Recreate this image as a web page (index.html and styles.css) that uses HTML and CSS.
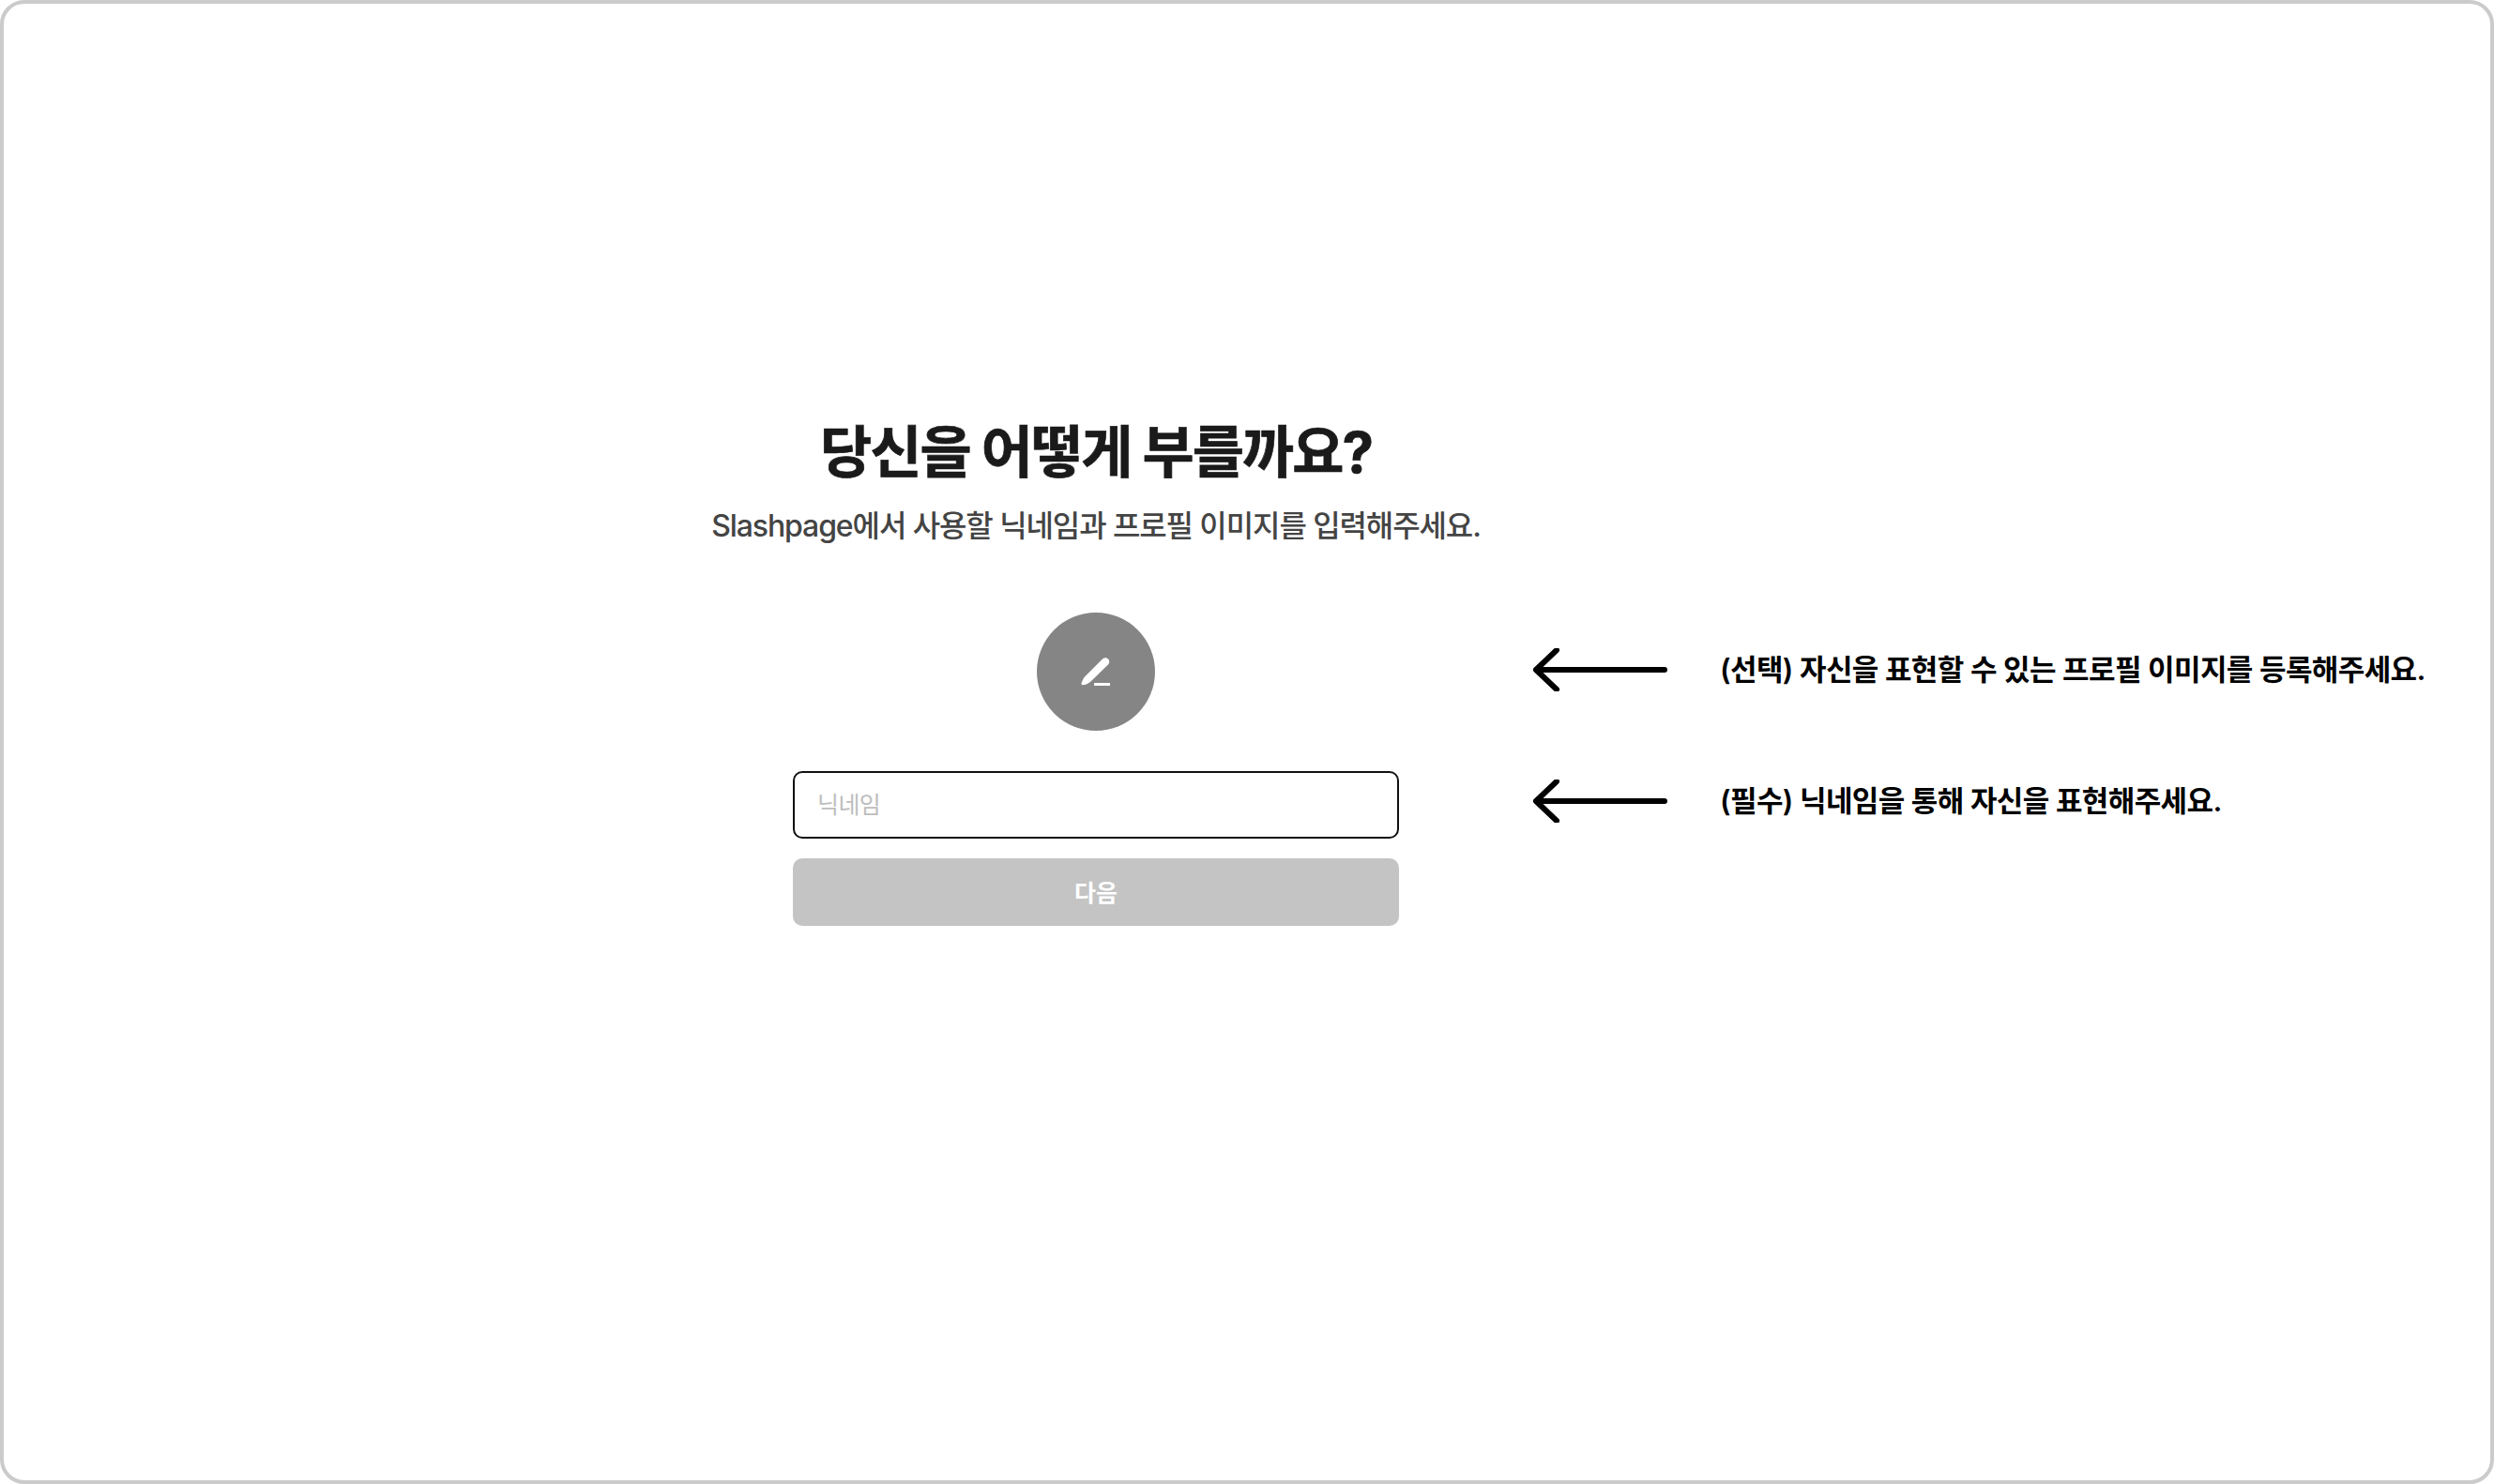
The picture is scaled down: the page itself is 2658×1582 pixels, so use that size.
FILE: index.html
```html
<!DOCTYPE html>
<html lang="ko">
<head>
    <meta charset="UTF-8">
    <title>Slashpage</title>
    <link rel="stylesheet" href="styles.css">
</head>
<body>
    <div class="frame">
        <div class="signup">
            <div class="intro">
                <h1>당신을 어떻게 부를까요?</h1>
                <p>Slashpage에서 사용할 닉네임과 프로필 이미지를 입력해주세요.</p>
            </div>

            <div class="avatar-cell">
                <button class="avatar" type="button" aria-label="프로필 이미지 편집">
                    <svg width="34" height="30" viewBox="0 0 34 30">
                        <path d="M24 1.5 C26 -0.3 28.5 0 30 1.5 C31.5 3 31.7 5.5 30 7.5 L11 26 C8.5 28 5 29.3 3 29.3 C1.7 29.3 1.2 28.3 1.6 27 C2.3 25 3.5 22.5 5 20.5 Z" fill="#fff"/>
                        <rect x="15" y="27" width="17" height="3" fill="#fff"/>
                    </svg>
                </button>
            </div>
            <div class="note note-avatar">
                <svg class="arrow" width="144" height="46" viewBox="0 0 144 46">
                    <path d="M141 23 H4 M26 2 L4 23 L26 44" fill="none" stroke="#000" stroke-width="6" stroke-linecap="round" stroke-linejoin="round"/>
                </svg>
                <span>(선택) 자신을 표현할 수 있는 프로필 이미지를 등록해주세요.</span>
            </div>

            <input class="nickname" type="text" placeholder="닉네임">
            <div class="note note-nickname">
                <svg class="arrow" width="144" height="46" viewBox="0 0 144 46">
                    <path d="M141 23 H4 M26 2 L4 23 L26 44" fill="none" stroke="#000" stroke-width="6" stroke-linecap="round" stroke-linejoin="round"/>
                </svg>
                <span>(필수) 닉네임을 통해 자신을 표현해주세요.</span>
            </div>

            <button class="next" type="button" disabled>다음</button>
        </div>
    </div>
</body>
</html>
```

FILE: styles.css
```css
* {
    box-sizing: border-box;
    margin: 0;
    padding: 0;
}

body {
    font-family: Inter, "Noto Sans CJK KR", sans-serif;
    background: #fff;
    color: #1a1a1a;
}

.frame {
    width: 2658px;
    height: 1582px;
    border: 4px solid #cbcbcb;
    border-radius: 26px;
    padding: 438px 0 0 841px;
    background: #fff;
}

.signup {
    display: grid;
    grid-template-columns: 646px auto;
    column-gap: 142px;
    justify-content: start;
}

.intro {
    grid-column: 1;
    grid-row: 1;
    text-align: center;
    margin: 0 -100px 70px;
}

.intro h1 {
    font-size: 60px;
    line-height: 80px;
    font-weight: 700;
    letter-spacing: -2px;
    -webkit-text-stroke: 0.7px #1a1a1a;
}

.intro p {
    margin-top: 17px;
    font-size: 32px;
    line-height: 44px;
    font-weight: 500;
    letter-spacing: -1.1px;
    color: #444;
}

.avatar-cell {
    grid-column: 1;
    grid-row: 2;
    display: flex;
    justify-content: center;
    margin-bottom: 43px;
}

.avatar {
    display: flex;
    align-items: center;
    justify-content: center;
    width: 126px;
    height: 126px;
    border: none;
    border-radius: 50%;
    background: #858585;
}

.nickname {
    grid-column: 1;
    grid-row: 3;
    height: 72px;
    padding: 0 24px;
    border: 2px solid #111;
    border-radius: 10px;
    font-family: inherit;
    font-size: 25px;
    letter-spacing: -0.6px;
    outline: none;
}

.nickname::placeholder {
    color: #bdbdbd;
}

.next {
    grid-column: 1;
    grid-row: 4;
    height: 72px;
    margin-top: 21px;
    padding-bottom: 2px;
    border: none;
    border-radius: 10px;
    background: #c4c4c4;
    color: #fff;
    font-family: inherit;
    font-size: 25px;
    font-weight: 600;
}

.note {
    grid-column: 2;
    display: flex;
    align-items: center;
    gap: 56px;
    font-size: 31px;
    font-weight: 600;
    letter-spacing: -0.6px;
    color: #000;
    white-space: nowrap;
}

.note span {
    margin-bottom: 6px;
}

.note-avatar {
    grid-row: 2;
    margin-bottom: 47px;
}

.note-nickname {
    grid-row: 3;
    margin-top: -8px;
}
```
